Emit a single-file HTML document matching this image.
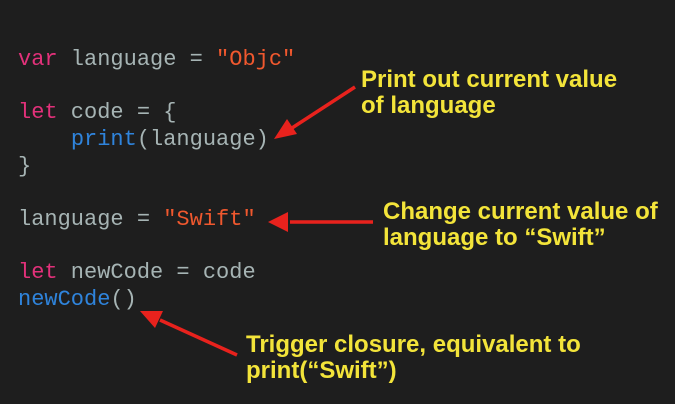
<!DOCTYPE html>
<html><head><meta charset="utf-8"><style>
html,body{margin:0;padding:0;}
body{width:675px;height:404px;background:#1e1e1e;position:relative;overflow:hidden;}
.code{position:absolute;left:18px;top:47px;font-family:"Liberation Mono",monospace;font-size:22px;line-height:26.67px;color:#a6b4b4;white-space:pre;}
.k{color:#e2317a}.s{color:#f0582e}.f{color:#2f84dc}
.n{position:absolute;font-family:"Liberation Sans",sans-serif;font-weight:bold;font-size:24px;line-height:26px;color:#f3e43a;white-space:pre;}
svg{position:absolute;left:0;top:0}
</style></head><body>
<div class="code"><span class="k">var</span> language = <span class="s">"Objc"</span>

<span class="k">let</span> code = {
    <span class="f">print</span>(language)
}

language = <span class="s">"Swift"</span>

<span class="k">let</span> newCode = code
<span class="f">newCode</span>()</div>
<div class="n" style="left:361px;top:67px">Print out current value
of language</div>
<div class="n" style="left:383px;top:199px">Change current value of
language to “Swift”</div>
<div class="n" style="left:246px;top:332px">Trigger closure, equivalent to
print(“Swift”)</div>
<svg width="675" height="404">
<g stroke="#e8221d" stroke-width="3.5" fill="#e8221d">
<line x1="355" y1="87" x2="292" y2="128"/>
<polygon points="274,139 287,119 297,134" stroke="none"/>
<line x1="373" y1="222" x2="290" y2="222"/>
<polygon points="268,222 288,212 288,232" stroke="none"/>
<line x1="237" y1="355" x2="160" y2="320"/>
<polygon points="140,311 163,311 155,328" stroke="none"/>
</g>
</svg>
</body></html>
